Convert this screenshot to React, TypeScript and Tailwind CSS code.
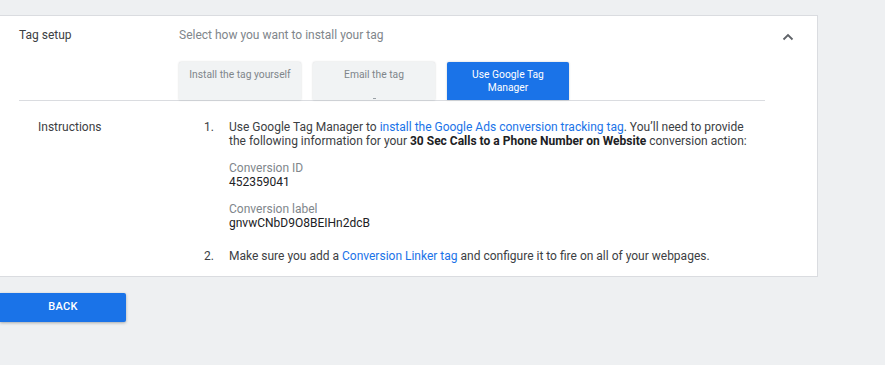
import React from "react";

export default function App() {
  return (
    <div className="w-[885px] h-[365px] bg-[#eef0f2] pt-[15px] overflow-hidden font-['Roboto',sans-serif] text-[12px] text-[#3c4043]">
      <div className="w-[818px] bg-white border border-l-0 border-[#dadce0] pb-[13px]">
        {/* header */}
        <div className="flex items-start pt-[9px] leading-[20px]">
          <div className="w-[179px] pl-[19px] text-[#3c4043]">Tag setup</div>
          <div className="flex-1 text-[#80868b]">Select how you want to install your tag</div>
          <div className="w-[12px] h-[20px] flex items-center">
            <svg width="12" height="8" viewBox="0 0 12 8" className="mt-[4px]">
              <path d="M1.5 6.5 L6 2 L10.5 6.5" fill="none" stroke="#5f6368" strokeWidth="1.8" />
            </svg>
          </div>
          <div className="w-[23px]" />
        </div>
        {/* tabs */}
        <div className="ml-[19px] w-[746px] mt-[17px] border-b border-[#dadce0] pl-[160px] flex gap-[12px]">
          <div className="w-[122px] h-[38px] bg-[#f1f3f4] rounded-t-[2px] shadow-[0_0_2px_rgba(60,64,67,0.25)] pt-[6px] text-center text-[10.3px] leading-[13px] text-[#80868b]">
            Install the tag yourself
          </div>
          <div className="w-[122px] h-[38px] bg-[#f1f3f4] rounded-t-[2px] shadow-[0_0_2px_rgba(60,64,67,0.25)] pt-[6px] text-center text-[10.3px] leading-[13px] text-[#80868b] flex flex-col items-center">
            <span>Email the tag</span>
            <span className="mt-auto mb-[1px] w-[3px] h-[1px] bg-[#9aa0a6]" />
          </div>
          <div className="w-[122px] h-[38px] bg-[#1a73e8] rounded-t-[2px] shadow-[0_0_2px_rgba(60,64,67,0.3)] pt-[6px] text-center text-[10.3px] leading-[13px] text-white">
            Use Google Tag
            <br />
            Manager
          </div>
        </div>
        {/* instructions */}
        <div className="flex pt-[19px] leading-[14px]">
          <div className="w-[204px] pl-[38px] text-[#3c4043]">Instructions</div>
          <div className="flex-1">
            <div className="flex">
              <div className="w-[25px] text-[#3c4043]">1.</div>
              <div className="flex-1 pr-[40px]">
                <div>
                  Use Google Tag Manager to{" "}
                  <span className="text-[#1a73e8]">install the Google Ads conversion tracking tag</span>. You’ll need to provide
                  <br />
                  the following information for your{" "}
                  <span className="font-bold text-[#202124]">30 Sec Calls to a Phone Number on Website</span> conversion action:
                </div>
                <div className="mt-[13px] text-[#80868b]">Conversion ID</div>
                <div className="text-[#202124]">452359041</div>
                <div className="mt-[13px] text-[#80868b]">Conversion label</div>
                <div className="text-[#202124]">gnvwCNbD9O8BEIHn2dcB</div>
              </div>
            </div>
            <div className="flex mt-[19px]">
              <div className="w-[25px] text-[#3c4043]">2.</div>
              <div className="flex-1">
                Make sure you add a <span className="text-[#1a73e8]">Conversion Linker tag</span> and configure it to fire on all of your webpages.
              </div>
            </div>
          </div>
        </div>
      </div>
      <div className="mt-[16px] w-[126px] h-[29px] bg-[#1a73e8] rounded-r-[2px] shadow-[0_1px_3px_rgba(60,64,67,0.4)] flex items-center justify-center text-white text-[11px] font-medium tracking-[0.3px]">
        BACK
      </div>
    </div>
  );
}
